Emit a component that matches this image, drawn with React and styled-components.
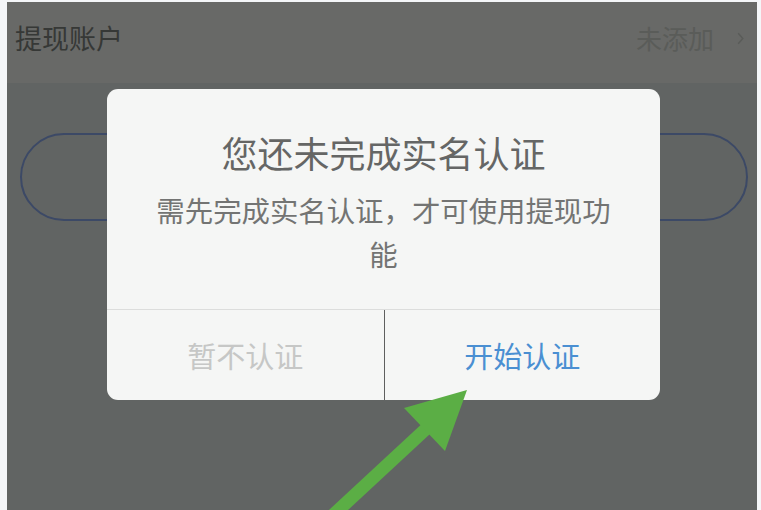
import React from "react";
import styled, { createGlobalStyle } from "styled-components";

const Global = createGlobalStyle`
  html, body { margin: 0; padding: 0; background: #f4f6f8; }
  body { font-family: "Noto Sans CJK SC", "Noto Sans", sans-serif; }
  #root { width: 761px; height: 510px; overflow: hidden; }
`;

const Frame = styled.div`
  position: relative;
  width: 761px;
  height: 510px;
  padding: 2px 4px 0 7px;
  box-sizing: border-box;
`;

const Page = styled.div`
  width: 750px;
  height: 508px;
  display: flex;
  flex-direction: column;
  background: #616463;
`;

const Header = styled.div`
  height: 81px;
  flex: none;
  background: #686967;
  display: flex;
  align-items: flex-start;
  justify-content: space-between;
  padding: 18px 13px 0 8px;
  box-sizing: border-box;
`;

const HeaderTitle = styled.span`
  font-size: 27px;
  line-height: 36px;
  color: #363836;
`;

const HeaderValue = styled.span`
  display: flex;
  align-items: center;
  gap: 23px;
  font-size: 26px;
  line-height: 36px;
  color: #5a5c59;
`;

const Chevron = styled.svg`
  width: 7px;
  height: 13px;
`;

const Body = styled.div`
  flex: 1;
  padding: 50px 9px 0 13px;
`;

const Pill = styled.div`
  height: 84px;
  border: 2px solid #3c4966;
  border-radius: 44px;
`;

const Overlay = styled.div`
  position: absolute;
  inset: 0;
  display: flex;
  justify-content: center;
  align-items: flex-start;
  padding: 89px 0 0 6px;
  box-sizing: border-box;
`;

const Dialog = styled.div`
  width: 553px;
  background: #f5f6f5;
  border-radius: 11px;
  display: flex;
  flex-direction: column;
  overflow: hidden;
`;

const Content = styled.div`
  padding: 41px 38px 33px;
  display: flex;
  flex-direction: column;
  align-items: center;
  gap: 14px;
  text-align: center;
  border-bottom: 1px solid #dcdddc;
`;

const Title = styled.div`
  font-size: 36px;
  line-height: 44px;
  color: #656665;
`;

const Message = styled.div`
  font-size: 28.4px;
  line-height: 44px;
  color: #737473;
`;

const Actions = styled.div`
  display: grid;
  grid-template-columns: 1fr 1fr;
  height: 90px;
`;

const Action = styled.div`
  display: flex;
  align-items: center;
  justify-content: center;
  font-size: 29px;
  color: ${(p) => (p.$primary ? "#4a8fd2" : "#c6c7c6")};
  border-left: ${(p) => (p.$primary ? "1px solid #5e5f5e" : "none")};
`;

const Arrow = styled.svg`
  position: absolute;
  left: 0;
  top: 0;
  width: 761px;
  height: 510px;
  pointer-events: none;
`;

export default function App() {
  return (
    <>
      <Global />
      <Frame>
        <Page>
          <Header>
            <HeaderTitle>提现账户</HeaderTitle>
            <HeaderValue>
              未添加
              <Chevron viewBox="0 0 7 13">
                <path d="M1.2 1.2 L5.8 6.5 L1.2 11.8" fill="none" stroke="#5a5c59" strokeWidth="1.5" />
              </Chevron>
            </HeaderValue>
          </Header>
          <Body>
            <Pill />
          </Body>
        </Page>
        <Overlay>
          <Dialog>
            <Content>
              <Title>您还未完成实名认证</Title>
              <Message>需先完成实名认证，才可使用提现功能</Message>
            </Content>
            <Actions>
              <Action>暂不认证</Action>
              <Action $primary>开始认证</Action>
            </Actions>
          </Dialog>
        </Overlay>
        <Arrow viewBox="0 0 761 510">
          <line x1="332" y1="516" x2="428" y2="427" stroke="#5bae45" strokeWidth="13" />
          <polygon points="467,390 404,408 445,451" fill="#5bae45" />
        </Arrow>
      </Frame>
    </>
  );
}
